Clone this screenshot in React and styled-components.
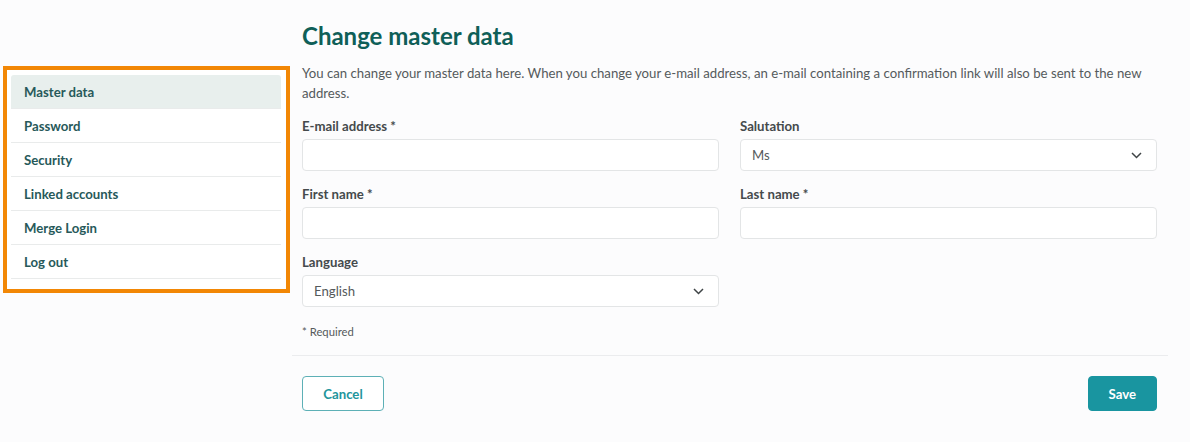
import React from 'react';
import styled, { createGlobalStyle } from 'styled-components';

const GlobalStyle = createGlobalStyle`
  html, body {
    margin: 0;
    padding: 0;
    background: #fcfcfd;
    font-family: Lato, "Open Sans", Arial, sans-serif;
  }
`;

const Page = styled.div`
  display: flex;
  align-items: flex-start;
  width: 1190px;
  height: 442px;
  box-sizing: border-box;
  padding-left: 3px;
`;

const Sidebar = styled.nav`
  width: 287px;
  box-sizing: border-box;
  margin-top: 66px;
  border: 4px solid #f28705;
  padding: 5px 5px 10px 4px;
  background: #ffffff;
`;

const NavItem = styled.div`
  height: 33px;
  display: flex;
  align-items: center;
  padding-left: 13px;
  border-bottom: 1px solid #e9ebeb;
  border-radius: ${(p) => (p.active ? '3px 3px 0 0' : '0')};
  background: ${(p) => (p.active ? '#e8efed' : 'transparent')};
  color: #27595a;
  font-size: 13.2px;
  font-weight: 700;
`;

const Main = styled.main`
  width: 876px;
  margin-left: 2px;
`;

const Content = styled.div`
  padding: 0 11px 0 10px;
`;

const Title = styled.h1`
  margin: 20px 0 0;
  font-size: 24px;
  line-height: 32px;
  font-weight: 700;
  color: #0f5f58;
`;

const Intro = styled.p`
  margin: 11px 0 0;
  font-size: 13.2px;
  line-height: 20px;
  color: #555a5c;
`;

const Grid = styled.div`
  display: grid;
  grid-template-columns: 417px 417px;
  column-gap: 21px;
  row-gap: 13px;
  margin-top: 13px;
`;

const Field = styled.div`
  display: flex;
  flex-direction: column;
`;

const Label = styled.label`
  font-size: 13.2px;
  line-height: 20px;
  font-weight: 700;
  color: #454a4c;
`;

const Input = styled.div`
  margin-top: 3px;
  height: 32px;
  box-sizing: border-box;
  border: 1px solid #e3e5e6;
  border-radius: 4px;
  background: #ffffff;
  display: flex;
  align-items: center;
  justify-content: space-between;
  padding: 0 14px 0 11px;
  font-size: 13.2px;
  color: #555a5c;
`;

const Chevron = () => (
  <svg width="11" height="7" viewBox="0 0 11 7">
    <polyline points="1,1 5.5,5.5 10,1" fill="none" stroke="#3f4446" strokeWidth="1.5" />
  </svg>
);

const Required = styled.div`
  margin-top: 17px;
  font-size: 11.3px;
  line-height: 16px;
  color: #555a5c;
`;

const Divider = styled.hr`
  margin: 15px 0 0;
  border: none;
  border-top: 1px solid #ebecee;
`;

const Actions = styled.div`
  display: flex;
  justify-content: space-between;
  margin-top: 20px;
`;

const Button = styled.button`
  height: 35px;
  box-sizing: border-box;
  padding: 0 20px;
  border-radius: 4px;
  border: 1px solid ${(p) => (p.primary ? '#1995a0' : '#5db0b6')};
  background: ${(p) => (p.primary ? '#1995a0' : '#ffffff')};
  color: ${(p) => (p.primary ? '#ffffff' : '#22959c')};
  font-family: inherit;
  font-size: 13.2px;
  font-weight: 700;
  min-width: ${(p) => (p.primary ? '69px' : '82px')};
`;

const navItems = ['Master data', 'Password', 'Security', 'Linked accounts', 'Merge Login', 'Log out'];

export default function App() {
  return (
    <Page>
      <GlobalStyle />
      <Sidebar>
        {navItems.map((item, i) => (
          <NavItem key={item} active={i === 0}>
            {item}
          </NavItem>
        ))}
      </Sidebar>
      <Main>
        <Content>
          <Title>Change master data</Title>
          <Intro>
            You can change your master data here. When you change your e-mail address, an e-mail containing a
            confirmation link will also be sent to the new address.
          </Intro>
          <Grid>
            <Field>
              <Label>E-mail address *</Label>
              <Input />
            </Field>
            <Field>
              <Label>Salutation</Label>
              <Input>
                Ms
                <Chevron />
              </Input>
            </Field>
            <Field>
              <Label>First name *</Label>
              <Input />
            </Field>
            <Field>
              <Label>Last name *</Label>
              <Input />
            </Field>
            <Field>
              <Label>Language</Label>
              <Input>
                English
                <Chevron />
              </Input>
            </Field>
          </Grid>
          <Required>* Required</Required>
        </Content>
        <Divider />
        <Content>
          <Actions>
            <Button>Cancel</Button>
            <Button primary>Save</Button>
          </Actions>
        </Content>
      </Main>
    </Page>
  );
}
